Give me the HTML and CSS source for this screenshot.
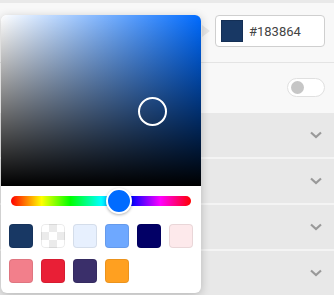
FILE: index.html
```html
<!DOCTYPE html>
<html lang="en">
<head>
  <meta charset="UTF-8" />
  <title>Color picker</title>
  <link rel="stylesheet" href="styles.css">
</head>
<body>
  <div class="page">
    <div class="topbar"></div>

    <!-- color field -->
    <div class="row field-row">
      <div class="color-input">
        <span class="color-chip"></span>
        <span class="color-value">#183864</span>
      </div>
    </div>

    <!-- toggle -->
    <div class="row toggle-row">
      <span class="toggle"><span class="knob"></span></span>
    </div>

    <!-- accordion sections -->
    <div class="acc">
      <svg class="chev" width="12" height="8" viewBox="0 0 12 8"><polyline points="1,1.5 6,6 11,1.5" /></svg>
    </div>
    <div class="acc">
      <svg class="chev" width="12" height="8" viewBox="0 0 12 8"><polyline points="1,1.5 6,6 11,1.5" /></svg>
    </div>
    <div class="acc">
      <svg class="chev" width="12" height="8" viewBox="0 0 12 8"><polyline points="1,1.5 6,6 11,1.5" /></svg>
    </div>
    <div class="acc">
      <svg class="chev" width="12" height="8" viewBox="0 0 12 8"><polyline points="1,1.5 6,6 11,1.5" /></svg>
    </div>
  </div>

  <!-- picker popover -->
  <span class="arrow"></span>
  <div class="picker">
    <div class="saturation">
      <span class="cursor"></span>
    </div>
    <div class="hue">
      <span class="hue-thumb"></span>
    </div>
    <div class="swatches">
      <span class="swatch" style="background:#183864"></span>
      <span class="swatch clear"></span>
      <span class="swatch" style="background:#e7f0fe"></span>
      <span class="swatch" style="background:#6ea8ff"></span>
      <span class="swatch" style="background:#020066"></span>
      <span class="swatch" style="background:#fde9eb"></span>
      <span class="swatch" style="background:#f27f8b"></span>
      <span class="swatch" style="background:#e91f36"></span>
      <span class="swatch" style="background:#3a2f6a"></span>
      <span class="swatch" style="background:#ffa020"></span>
    </div>
  </div>
</body>
</html>
```

FILE: styles.css
```css
/* ---------- base ---------- */
body {
  margin: 0;
  font-family: Roboto, "Liberation Sans", sans-serif;
  background: #e8e8e8;
  overflow: hidden;
}

.page {
  width: 334px;
  height: 295px;
  overflow: hidden;
}

.topbar {
  height: 3px;
  background: #e9e9e9;
}

/* ---------- rows ---------- */
.row {
  display: flex;
  align-items: center;
  justify-content: flex-end;
  padding-right: 9px;
  background: #f8f8f8;
}

.field-row {
  height: 60px;
  border-bottom: 1px solid #e4e4e4;
  box-sizing: border-box;
  padding-bottom: 3px;
}

.toggle-row {
  height: 50px;
  padding-bottom: 1px;
  box-sizing: border-box;
}

.color-input {
  display: flex;
  align-items: center;
  gap: 6px;
  width: 110px;
  height: 32px;
  box-sizing: border-box;
  padding-left: 5px;
  background: #fff;
  border: 1px solid #cfcfcf;
  border-radius: 4px;
}

.color-chip {
  width: 22px;
  height: 22px;
  background: #183864;
  box-shadow: inset 0 0 0 1px rgba(0,0,0,0.15);
}

.color-value {
  font-size: 13px;
  color: #444;
}

.toggle {
  display: flex;
  align-items: center;
  width: 38px;
  height: 19px;
  box-sizing: border-box;
  padding-left: 3px;
  background: #fff;
  border: 1px solid #e0e0e0;
  border-radius: 10px;
}

.knob {
  width: 13px;
  height: 13px;
  border-radius: 50%;
  background: #c6c6c6;
}

/* ---------- accordion ---------- */
.acc {
  display: flex;
  align-items: center;
  justify-content: flex-end;
  height: 44px;
  padding-right: 12px;
  background: #e8e8e8;
  border-bottom: 2px solid #f4f4f4;
}

.chev polyline {
  fill: none;
  stroke: #999;
  stroke-width: 2.2;
}

/* ---------- popover ---------- */
.arrow {
  position: absolute;
  left: 202px;
  top: 25px;
  border-top: 6px solid transparent;
  border-bottom: 6px solid transparent;
  border-left: 8px solid #e6e6e6;
}

.picker {
  position: absolute;
  left: 1px;
  top: 15px;
  width: 200px;
  height: 278px;
  background: #fff;
  border-radius: 6px;
  box-shadow: 0 2px 10px rgba(0,0,0,0.22);
  overflow: hidden;
}

.saturation {
  position: relative;
  height: 171px;
  background:
    linear-gradient(to bottom, rgba(0,0,0,0), #000),
    linear-gradient(to right, #fff, #006bff);
}

.cursor {
  position: absolute;
  left: 137px;
  top: 82px;
  width: 29px;
  height: 29px;
  box-sizing: border-box;
  border: 2px solid #fff;
  border-radius: 50%;
}

.hue {
  position: relative;
  height: 10px;
  margin: 10px 10px 0;
  border-radius: 5px;
  background: linear-gradient(to right, #f00, #ff0 17%, #0f0 33%, #0ff 50%, #00f 67%, #f0f 83%, #f00);
}

.hue-thumb {
  position: absolute;
  left: 95px;
  top: -8px;
  width: 26px;
  height: 26px;
  box-sizing: border-box;
  border-radius: 50%;
  background: #006bff;
  border: 2px solid #fff;
  box-shadow: 0 1px 3px rgba(0,0,0,0.3);
}

.swatches {
  display: grid;
  grid-template-columns: repeat(6, 24px);
  column-gap: 8px;
  row-gap: 11px;
  padding: 18px 8px 0;
}

.swatch {
  width: 24px;
  height: 24px;
  border-radius: 4px;
  box-shadow: inset 0 0 0 1px rgba(0,0,0,0.08);
}

.swatch.clear {
  background-color: #fff;
  background-image:
    linear-gradient(45deg, #ebebeb 25%, transparent 25%, transparent 75%, #ebebeb 75%),
    linear-gradient(45deg, #ebebeb 25%, transparent 25%, transparent 75%, #ebebeb 75%);
  background-size: 16px 16px;
  background-position: 0 0, 8px 8px;
}
```
